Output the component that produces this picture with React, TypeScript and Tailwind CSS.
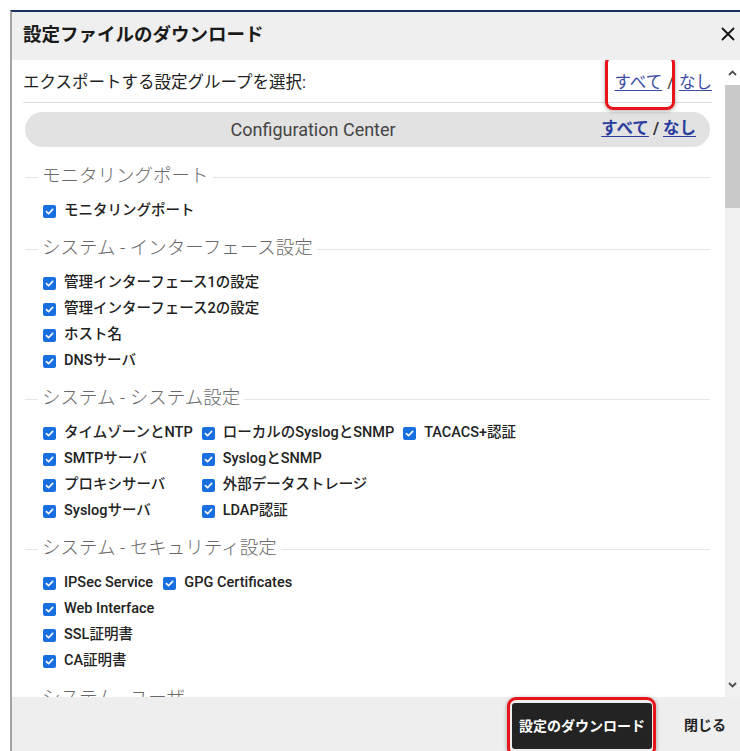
import React from "react";

type Group = {
  title: string;
  cols: number;
  items: string[];
};

const groups: Group[] = [
  { title: "モニタリングポート", cols: 1, items: ["モニタリングポート"] },
  {
    title: "システム - インターフェース設定",
    cols: 1,
    items: ["管理インターフェース1の設定", "管理インターフェース2の設定", "ホスト名", "DNSサーバ"],
  },
  {
    title: "システム - システム設定",
    cols: 3,
    items: [
      "タイムゾーンとNTP",
      "ローカルのSyslogとSNMP",
      "TACACS+認証",
      "SMTPサーバ",
      "SyslogとSNMP",
      "",
      "プロキシサーバ",
      "外部データストレージ",
      "",
      "Syslogサーバ",
      "LDAP認証",
      "",
    ],
  },
  {
    title: "システム - セキュリティ設定",
    cols: 2,
    items: ["IPSec Service", "GPG Certificates", "Web Interface", "", "SSL証明書", "", "CA証明書", ""],
  },
  { title: "システム - ユーザ", cols: 1, items: ["ユーザ", "パスワードポリシー"] },
];

function CheckIcon() {
  return (
    <span className="flex h-[13px] w-[13px] shrink-0 items-center justify-center rounded-[2px] bg-[#1a6fe0]">
      <svg width="9" height="9" viewBox="0 0 10 10" fill="none">
        <path d="M1.6 5.2 4 7.5 8.5 2.6" stroke="white" strokeWidth="1.8" strokeLinecap="round" strokeLinejoin="round" />
      </svg>
    </span>
  );
}

function Legend({ title }: { title: string }) {
  return (
    <div className="flex h-[28px] items-center">
      <div className="h-px w-[13px] bg-[#e6e6e6]" />
      <span className="mb-[2px] px-[4px] text-[18.5px] font-light leading-none text-[#686868]">{title}</span>
      <div className="h-px flex-1 bg-[#e6e6e6]" />
    </div>
  );
}

function GroupBlock({ group }: { group: Group }) {
  const gridCols =
    group.cols === 3
      ? "grid-cols-[auto_auto_auto]"
      : group.cols === 2
        ? "grid-cols-[auto_auto]"
        : "grid-cols-[auto]";
  return (
    <div>
      <Legend title={group.title} />
      <div className={`grid ${gridCols} justify-start gap-x-[9px] pb-[11px] pl-[18px] pt-[7px]`}>
        {group.items.map((label, i) =>
          label ? (
            <div key={i} className="flex h-[26px] items-center gap-[8px]">
              <CheckIcon />
              <span className="whitespace-nowrap text-[14.5px] font-medium text-[#222]">{label}</span>
            </div>
          ) : (
            <div key={i} />
          )
        )}
      </div>
    </div>
  );
}

export default function App() {
  return (
    <div
      className="h-[751px] w-[740px] overflow-hidden bg-white pl-[10px] pt-[10px]"
      style={{ fontFamily: 'Roboto, "Noto Sans CJK JP", sans-serif' }}
    >
      <div className="flex flex-col border-l-2 border-t-2 border-l-[#a3a3a3] border-t-[#1c305f]">
        {/* header */}
        <div className="flex h-[48px] shrink-0 items-center justify-between bg-[#efefef] pl-[11px] pr-[5px]">
          <h1 className="text-[18.5px] font-bold text-[#1a1a1a]">設定ファイルのダウンロード</h1>
          <svg width="14" height="14" viewBox="0 0 14 14" className="-mt-[5px]">
            <path d="M1 1 13 13M13 1 1 13" stroke="#111" strokeWidth="1.8" />
          </svg>
        </div>

        {/* body */}
        <div className="flex h-[637px] shrink-0">
          <div className="flex-1 overflow-hidden pl-[11px] pr-[13px]">
            <div className="flex h-[43px] items-center justify-between border-b border-[#dcdcdc] pt-[5px]">
              <span className="text-[16.5px] text-[#222]">エクスポートする設定グループを選択:</span>
              <div className="flex items-center text-[16.5px]">
                <a className="relative text-[#3b4ba3] underline underline-offset-2">
                  すべて
                  <span className="absolute -bottom-[14px] -left-[10px] -right-[13px] -top-[16px] rounded-[8px] border-[3px] border-[#e8141c] shadow-[0_1px_4px_rgba(0,0,0,0.35)]" />
                </a>
                <span className="px-[5px] text-[#333]">/</span>
                <a className="text-[#3b4ba3] underline underline-offset-2">なし</a>
              </div>
            </div>

            <div className="mx-[2px] mt-[9px] flex h-[35px] items-center rounded-full bg-[#e2e2e2] pr-[14px]">
              <span className="flex-1 text-center text-[18px] text-[#444]">Configuration Center</span>
              <div className="flex items-center text-[16.5px] font-bold">
                <a className="text-[#2a3e9e] underline underline-offset-2">すべて</a>
                <span className="px-[4px] text-[#333]">/</span>
                <a className="text-[#2a3e9e] underline underline-offset-2">なし</a>
              </div>
            </div>

            <div className="mx-[2px] mt-[16px]">
              {groups.map((g) => (
                <GroupBlock key={g.title} group={g} />
              ))}
            </div>
          </div>

          {/* scrollbar */}
          <div className="flex w-[15px] shrink-0 flex-col bg-[#f1f1f1]">
            <div className="flex h-[25px] items-center justify-center bg-white">
              <svg width="9" height="6" viewBox="0 0 9 6">
                <path d="M1 5 4.5 1.5 8 5" stroke="#505050" strokeWidth="1.8" fill="none" />
              </svg>
            </div>
            <div className="h-[123px] bg-[#c9c9c9]" />
            <div className="flex-1" />
            <div className="flex h-[25px] items-center justify-center">
              <svg width="9" height="6" viewBox="0 0 9 6">
                <path d="M1 1 4.5 4.5 8 1" stroke="#505050" strokeWidth="1.8" fill="none" />
              </svg>
            </div>
          </div>
        </div>

        {/* footer */}
        <div className="flex h-[60px] shrink-0 items-start justify-end bg-[#eeeeee] pr-[14px] pt-[6px]">
          <button className="relative flex h-[46px] w-[140px] items-center justify-center rounded-[3px] bg-[#232323] text-[14px] font-bold text-white">
            設定のダウンロード
            <span className="absolute -bottom-[8px] -left-[5px] -right-[4px] -top-[6px] rounded-[9px] border-[3px] border-[#e8141c] shadow-[0_1px_4px_rgba(0,0,0,0.35)]" />
          </button>
          <button className="ml-[32px] mt-[12px] text-[14px] font-bold text-[#222]">閉じる</button>
        </div>
      </div>
    </div>
  );
}
